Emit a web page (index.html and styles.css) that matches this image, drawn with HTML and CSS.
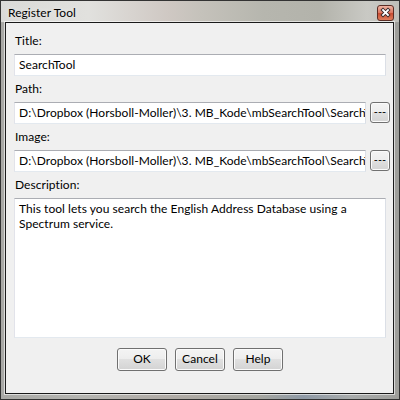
FILE: index.html
```html
<!DOCTYPE html>
<html>
<head>
<meta charset="utf-8">
<link rel="stylesheet" href="styles.css">
</head>
<body>
<div class="window">
  <div class="titlebar">
    <span class="title">Register Tool</span>
    <div class="close">
      <svg width="17" height="16" viewBox="0 0 17 16">
        <defs>
          <linearGradient id="cg" x1="0" y1="0" x2="0" y2="1">
            <stop offset="0" stop-color="#efb8a8"/>
            <stop offset=".48" stop-color="#dc7660"/>
            <stop offset=".52" stop-color="#c94b31"/>
            <stop offset="1" stop-color="#e08260"/>
          </linearGradient>
        </defs>
        <rect x=".5" y=".5" width="16" height="15" rx="2.5" fill="url(#cg)" stroke="#5a2d25"/>
        <path d="M6 5 L11 10 M11 5 L6 10" stroke="#33282a" stroke-width="3.6" stroke-linecap="square"/>
        <path d="M6 5 L11 10 M11 5 L6 10" stroke="#ffffff" stroke-width="1.8" stroke-linecap="square"/>
      </svg>
    </div>
  </div>
  <div class="client">
    <div class="field">
      <div class="label">Title:</div>
      <div class="textbox"><span class="value">SearchTool</span></div>
    </div>
    <div class="field">
      <div class="label">Path:</div>
      <div class="row">
        <div class="textbox"><span class="value">D:\Dropbox (Horsboll-Moller)\3. MB_Kode\mbSearchTool\SearchTool</span></div>
        <div class="browse">---</div>
      </div>
    </div>
    <div class="field">
      <div class="label">Image:</div>
      <div class="row">
        <div class="textbox"><span class="value">D:\Dropbox (Horsboll-Moller)\3. MB_Kode\mbSearchTool\SearchTool</span></div>
        <div class="browse">---</div>
      </div>
    </div>
    <div class="field">
      <div class="label">Description:</div>
      <div class="textarea">This tool lets you search the English Address Database using a Spectrum service.</div>
    </div>
    <div class="buttons">
      <div class="btn">OK</div>
      <div class="btn">Cancel</div>
      <div class="btn">Help</div>
    </div>
  </div>
</div>
</body>
</html>
```
FILE: styles.css
```css
* { box-sizing: border-box; }
html, body { margin: 0; padding: 0; }
body {
  width: 400px;
  height: 400px;
  overflow: hidden;
  font-family: Lato, "Open Sans", sans-serif;
  font-size: 12px;
  letter-spacing: 0.05px;
  color: #000;
}
.window {
  width: 400px;
  height: 400px;
  border: 1px solid #333;
  display: flex;
  flex-direction: column;
  background:
    linear-gradient(90deg, #a9a9a6 0%, #b4b4b0 20%, #b1aca7 40%, #aeaaa4 48%, #a5a6a0 65%, #8f9aa6 76%, #a8abab 88%, #9e9e9a 100%);
}
.titlebar {
  height: 21px;
  flex: none;
  display: flex;
  align-items: flex-start;
  padding: 4px 0 0 7px;
  background: linear-gradient(90deg, #dadad8 0%, #e1e1de 22%, #cfc8c3 42%, #c5c2bb 50%, #b6b6ae 66%, #b3b3ab 80%, #c9c9c4 92%, #bfbfba 100%);
}
.title {
  line-height: 15px;
  text-shadow: 0 0 6px rgba(255, 255, 255, 0.7);
}
.close {
  margin-left: auto;
  margin-right: 5px;
  width: 17px;
  height: 16px;
}
.close svg { display: block; }
.client {
  flex: 1;
  margin: 0 5px 5px 4px;
  border: 1px solid #1a1a1a;
  box-shadow: 0 0 0 1px rgba(255, 255, 255, 0.6);
  background: #f0f0f0;
  padding: 10px 7px 0 8px;
}
.field {
  margin-bottom: 5px;
}
.label {
  height: 16px;
  line-height: 16px;
  margin: 0 0 5px 1px;
}
.textbox {
  height: 22px;
  background: #fff;
  border: 1px solid;
  border-color: #abadb3 #dbdfe6 #e3e9ef #e2e3ea;
  padding: 0 0 0 4px;
  line-height: 20px;
  white-space: nowrap;
  overflow: hidden;
}
.row {
  display: flex;
  gap: 4px;
  margin-right: -4px;
}
.row .textbox {
  flex: 1;
  min-width: 0;
}
.browse {
  flex: none;
  width: 20px;
  height: 21px;
  border: 1px solid #707070;
  border-radius: 3px;
  background: linear-gradient(#f4f4f4 0%, #ededed 50%, #e0e0e0 50%, #d3d3d3 100%);
  box-shadow: inset 0 0 0 1px #fbfbfb;
  text-align: center;
  line-height: 18px;
  font-size: 11px;
  letter-spacing: 0;
  overflow: hidden;
}
.textarea {
  height: 140px;
  background: #fff;
  border: 1px solid;
  border-color: #abadb3 #dbdfe6 #e3e9ef #e2e3ea;
  padding: 2px 4px 0 4px;
  line-height: 15px;
}
.buttons {
  margin-top: 10px;
  display: flex;
  justify-content: center;
  gap: 8px;
}
.btn {
  width: 50px;
  height: 23px;
  border: 1px solid #707070;
  border-radius: 3px;
  background: linear-gradient(#f4f4f4 0%, #ededed 50%, #e0e0e0 50%, #d3d3d3 100%);
  box-shadow: inset 0 0 0 1px #fbfbfb;
  text-align: center;
  line-height: 20px;
}
```
